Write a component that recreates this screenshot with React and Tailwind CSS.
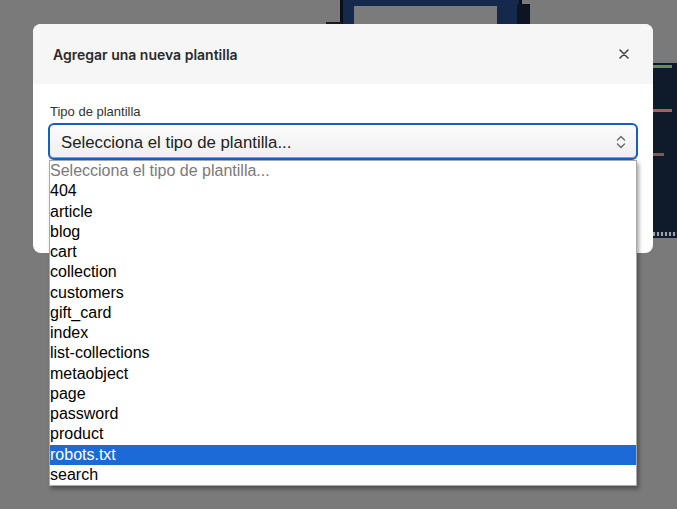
import React from "react";

const options = [
  "404",
  "article",
  "blog",
  "cart",
  "collection",
  "customers",
  "gift_card",
  "index",
  "list-collections",
  "metaobject",
  "page",
  "password",
  "product",
  "robots.txt",
  "search",
];

function Backdrop() {
  return (
    <div aria-hidden className="absolute inset-0 overflow-hidden">
      {/* frame peeking above the modal */}
      <div className="absolute left-[340px] top-[-10px] w-[182px] h-[40px] bg-[#14294b] border-[3px] border-[#0b0f18]">
        <div className="mt-[13px] ml-[11px] w-[143px] h-[30px] bg-[#7b7b7b]" />
      </div>
      <div className="absolute left-[517px] top-[4px] w-[13px] h-[22px] bg-[#0e1522]" />
      <div className="absolute left-[326px] top-[22px] w-[16px] h-[4px] bg-[#1a1a1a]" />
      {/* dark panel on the right */}
      <div className="absolute left-[653px] top-[63px] w-[30px] h-[175px] bg-[#0f1a2b] pt-[2px]">
        <div className="w-[19px] h-[3px] bg-[#6c8c4f]" />
        <div className="mt-[41px] w-[19px] h-[3px] bg-[#a3625c]" />
        <div className="mt-[41px] w-[11px] h-[3px] bg-[#7c5a5c]" />
        <div className="mt-[76px] h-[4px] bg-[repeating-linear-gradient(90deg,#9aa0a8_0_2px,#1a2333_2px_4px)]" />
      </div>
    </div>
  );
}

export default function App() {
  return (
    <div className="relative w-[677px] h-[509px] bg-[#7a7a7a] overflow-hidden font-['Liberation_Sans',Arial,sans-serif]">
      <Backdrop />
      <div className="relative pt-[24px] pl-[33px]">
        <div className="w-[620px] h-[229px] bg-white rounded-[8px]">
          <div className="h-[60px] bg-[#f6f6f6] rounded-t-[8px] flex items-center justify-between pl-[20px] pr-[24px]">
            <h2 className="font-['Inter',sans-serif] font-semibold text-[14px] text-[#2b2b2b]">
              Agregar una nueva plantilla
            </h2>
            <svg width="10" height="10" viewBox="0 0 10 10" className="text-[#444]">
              <path d="M1 1 L9 9 M9 1 L1 9" stroke="currentColor" strokeWidth="1.6" strokeLinecap="round" />
            </svg>
          </div>
          <div className="px-[15px] pt-[19px]">
            <label className="block pl-[2px] text-[13px] leading-[17px] text-[#333]">
              Tipo de plantilla
            </label>
            <div className="relative mt-[3px]">
              <div className="h-[37px] rounded-[6px] border-2 border-[#1b5dbf] bg-[linear-gradient(#fbfbfb,#efefef)] flex items-center justify-between pl-[11px] pr-[9px] shadow-[inset_0_-1px_0_#9a9a9a]">
                <span className="pt-[2px] text-[16.8px] text-[#222]">Selecciona el tipo de plantilla...</span>
                <svg width="12" height="16" viewBox="0 0 12 16" className="text-[#666]">
                  <path d="M2.5 6 L6 2.5 L9.5 6 M2.5 10 L6 13.5 L9.5 10" fill="none" stroke="currentColor" strokeWidth="1.3" strokeLinecap="round" strokeLinejoin="round" />
                </svg>
              </div>
              <ul className="absolute left-[1px] top-[37px] w-[588px] bg-white border border-[#a8a8a8] shadow-[2px_3px_4px_rgba(0,0,0,0.35)] text-[16px]">
                <li className="h-[20.25px] leading-[19px] text-[#7a7a7a]">
                  Selecciona el tipo de plantilla...
                </li>
                {options.map((o) => (
                  <li
                    key={o}
                    className={
                      o === "robots.txt"
                        ? "h-[20.25px] leading-[19px] bg-[#1b6ad6] text-white"
                        : "h-[20.25px] leading-[19px] text-black"
                    }
                  >
                    {o}
                  </li>
                ))}
              </ul>
            </div>
          </div>
        </div>
      </div>
    </div>
  );
}
